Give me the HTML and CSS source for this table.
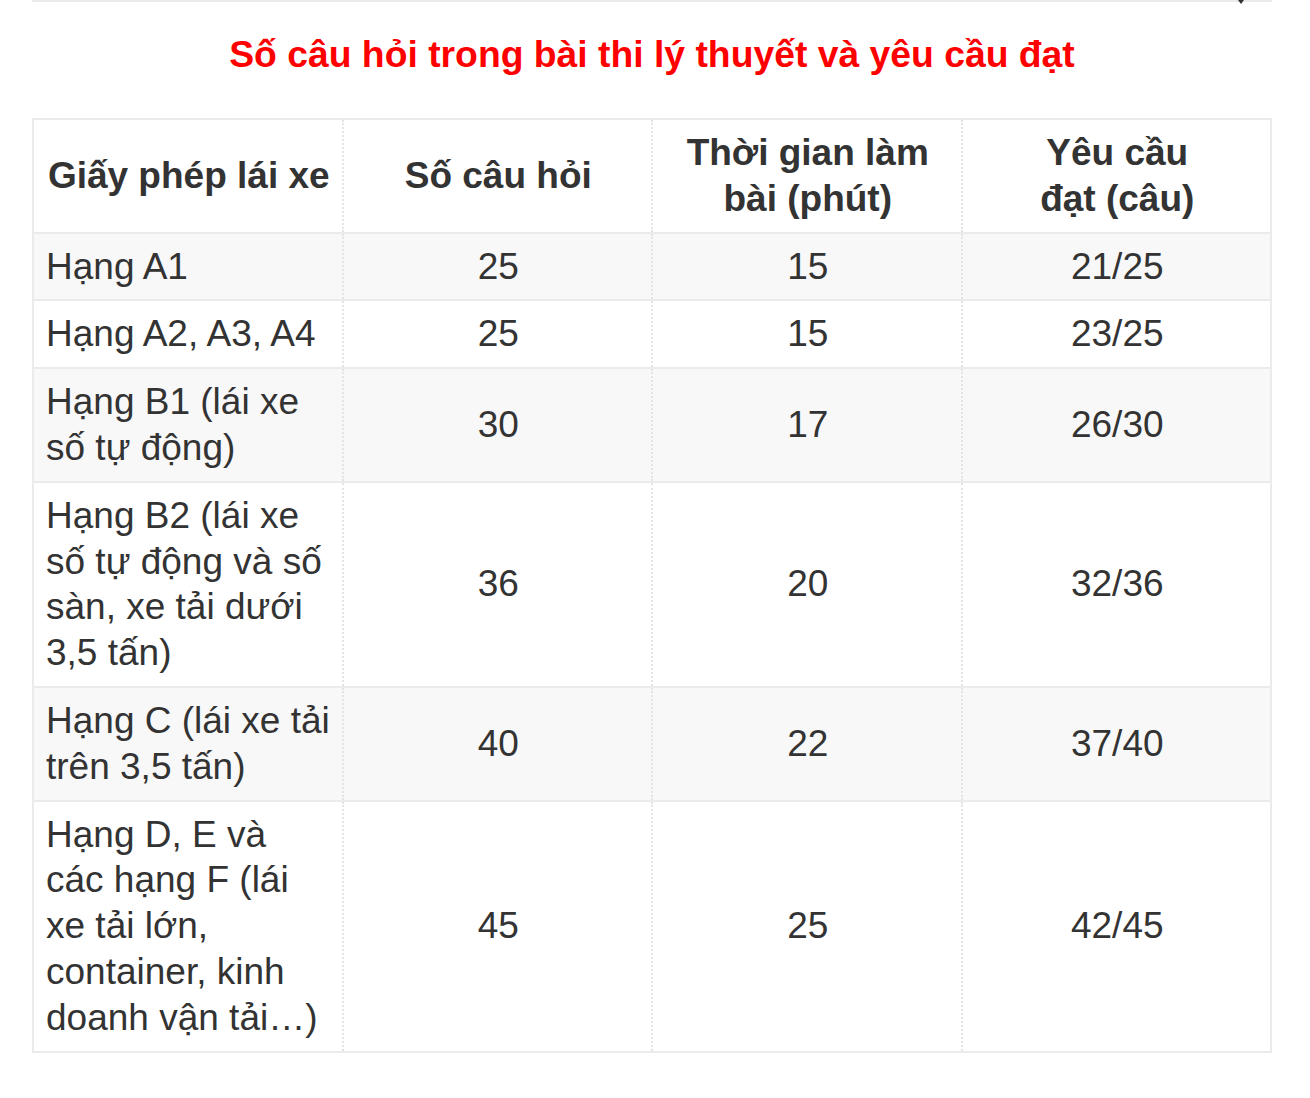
FILE: index.html
```html
<!DOCTYPE html>
<html lang="vi">
<head>
<meta charset="utf-8">
<title>Số câu hỏi trong bài thi lý thuyết</title>
<link rel="stylesheet" href="styles.css">
</head>
<body>
<div class="page">
  <div class="topbar"><span class="caret"></span></div>
  <h2 class="title">Số câu hỏi trong bài thi lý thuyết và yêu cầu đạt</h2>
  <table class="grid">
    <thead>
      <tr>
        <th>Giấy phép lái xe</th>
        <th>Số câu hỏi</th>
        <th>Thời gian làm bài (phút)</th>
        <th>Yêu cầu<br>đạt (câu)</th>
      </tr>
    </thead>
    <tbody>
      <tr class="alt"><td>Hạng A1</td><td>25</td><td>15</td><td>21/25</td></tr>
      <tr><td>Hạng A2, A3, A4</td><td>25</td><td>15</td><td>23/25</td></tr>
      <tr class="alt"><td>Hạng B1 (lái xe số tự động)</td><td>30</td><td>17</td><td>26/30</td></tr>
      <tr><td>Hạng B2 (lái xe số tự động và số sàn, xe tải dưới 3,5 tấn)</td><td>36</td><td>20</td><td>32/36</td></tr>
      <tr class="alt"><td>Hạng C (lái xe tải trên 3,5 tấn)</td><td>40</td><td>22</td><td>37/40</td></tr>
      <tr><td>Hạng D, E và các hạng F (lái xe tải lớn, container, kinh doanh vận tải…)</td><td>45</td><td>25</td><td>42/45</td></tr>
    </tbody>
  </table>
</div>
</body>
</html>
```
FILE: styles.css
```css
html, body {
  margin: 0;
  padding: 0;
  background: #fff;
}
.page {
  width: 1240px;
  margin-left: 32px;
  font-family: "Liberation Sans", Arial, sans-serif;
  color: #333;
}
.topbar {
  position: relative;
  height: 2px;
  background: #ebebeb;
}
.caret {
  position: absolute;
  left: 1206px;
  top: 0;
  width: 0;
  height: 0;
  border-left: 3px solid transparent;
  border-right: 3px solid transparent;
  border-top: 4px solid #333;
}
.title {
  margin: 30px 0 0;
  height: 86px;
  color: #ff0000;
  font-size: 37.3px;
  font-weight: bold;
  line-height: 44px;
  text-align: center;
}
.grid {
  width: 1240px;
  border-collapse: collapse;
  table-layout: fixed;
  border: 2px solid #ebebeb;
  font-size: 37px;
  line-height: 45.8px;
}
.grid th, .grid td {
  padding: 10px 10px 10px 12px;
  border-bottom: 2px solid #ebebeb;
  border-right: 2px dotted #e3e3e3;
  text-align: center;
  vertical-align: middle;
}
.grid th {
  font-weight: bold;
}
.grid td:first-child {
  text-align: left;
}
.grid tr.alt td {
  background: #f8f8f8;
}
```
